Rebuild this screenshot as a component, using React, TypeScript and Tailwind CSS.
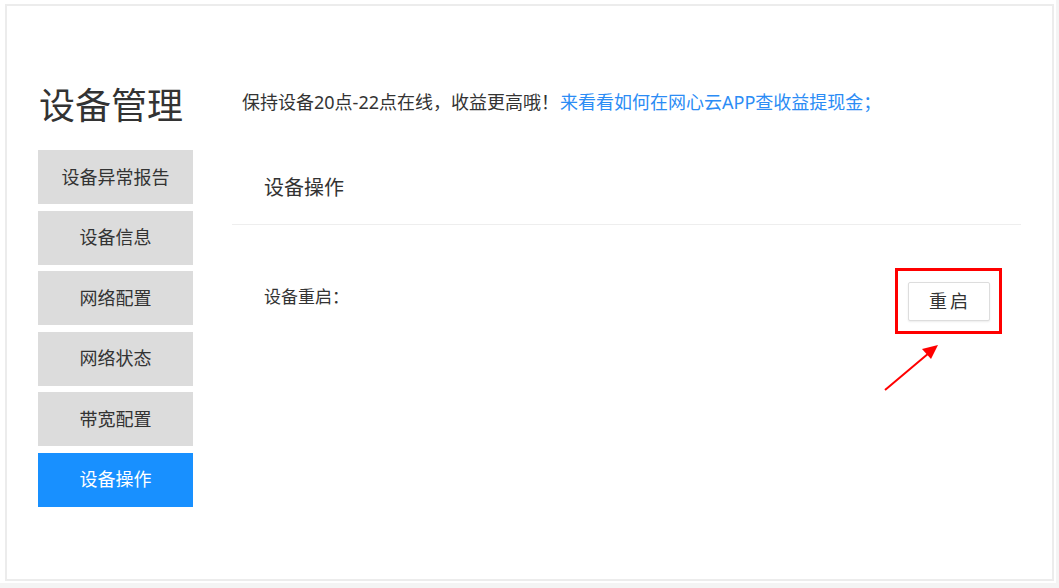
import React from "react";

const font = { fontFamily: '"Noto Sans", "Noto Sans CJK SC", sans-serif' };

const items = ["设备异常报告", "设备信息", "网络配置", "网络状态", "带宽配置", "设备操作"];

export default function App() {
  return (
    <div className="relative w-[1059px] h-[588px] bg-[#f4f4f4] overflow-hidden" style={font}>
      <div className="w-[1056px] h-[583px] bg-white pl-[5px] pt-[4px]">
        <div className="w-[1049px] h-[577px] border-2 border-[#ececec] bg-white flex pl-[31px] pr-[31px]">
          {/* left column */}
          <div className="w-[155px] shrink-0 pt-[76px] flex flex-col">
            <div className="h-[48px] flex items-center text-[36px] leading-[48px] text-[#333] pl-[1px]">设备管理</div>
            <div className="mt-[20px] flex flex-col gap-[6.6px]">
              {items.map((t, i) => (
                <div
                  key={t}
                  className={
                    i === items.length - 1
                      ? "h-[54px] flex items-center justify-center bg-[#1890ff] text-white text-[18px]"
                      : "h-[54px] flex items-center justify-center bg-[#dcdcdc] text-[#333] text-[18px]"
                  }
                >
                  {t}
                </div>
              ))}
            </div>
          </div>
          {/* main */}
          <div className="ml-[39px] flex-1 flex flex-col pt-[82px]">
            <div className="h-[28px] flex items-center pl-[10px] text-[18px] text-[#333] whitespace-nowrap">
              <span>保持设备20点-22点在线，收益更高哦！</span>
              <span className="ml-[1px] text-[#2b8cf5]">来看看如何在网心云APP查收益提现金；</span>
            </div>
            <div className="mt-[36px] h-[73px] flex items-center pl-[32px] border-b border-[#eeeeee] text-[20px] text-[#333]">
              设备操作
            </div>
            <div className="flex justify-between items-start pl-[32px] pr-[19px] pt-[43px]">
              <div className="mt-[17px] h-[24px] leading-[24px] text-[17px] text-[#333]">设备重启：</div>
              <div className="w-[107px] h-[66px] border-[3px] border-[#ff0000] flex items-center justify-center">
                <button className="w-[82px] h-[39px] border border-[#dddddd] bg-white shadow-[0_1px_2px_rgba(0,0,0,0.08)] text-[18px] text-[#333] tracking-[3px] pl-[3px] rounded-[2px]">
                  重启
                </button>
              </div>
            </div>
          </div>
        </div>
      </div>
      <svg className="absolute left-0 top-0 pointer-events-none" width="1059" height="588">
        <line x1="885" y1="390" x2="929" y2="353" stroke="#ff0000" strokeWidth="2" />
        <polygon points="938,345 931,359 922,349" fill="#ff0000" />
      </svg>
    </div>
  );
}
